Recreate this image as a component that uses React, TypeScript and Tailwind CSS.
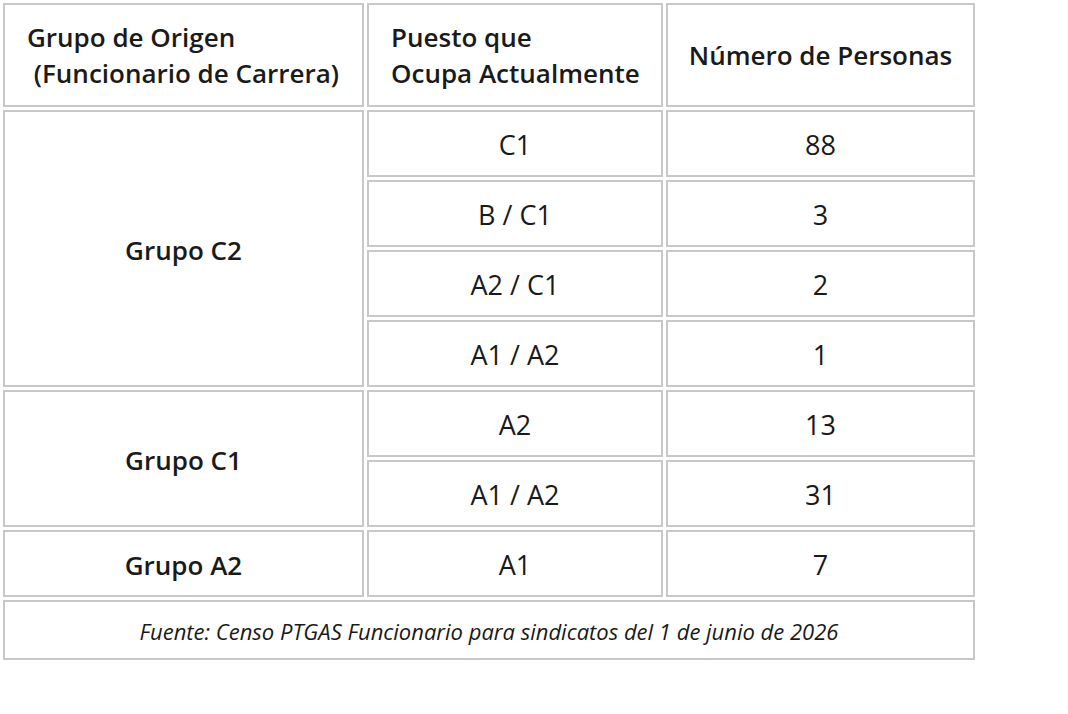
const rows: { group?: string; span?: number; puesto: string; n: string }[] = [
  { group: "Grupo C2", span: 4, puesto: "C1", n: "88" },
  { puesto: "B / C1", n: "3" },
  { puesto: "A2 / C1", n: "2" },
  { puesto: "A1 / A2", n: "1" },
  { group: "Grupo C1", span: 2, puesto: "A2", n: "13" },
  { puesto: "A1 / A2", n: "31" },
  { group: "Grupo A2", span: 1, puesto: "A1", n: "7" },
];

const cell = "border-2 border-[#c8c8c8] align-middle";

export default function App() {
  return (
    <div className="min-h-screen bg-white font-['Open_Sans',sans-serif] text-[#1a1a1a]">
      <table className="table-fixed border-separate border-spacing-[3px] w-[978px]">
        <thead>
          <tr className="h-[104px]">
            <th className={`${cell} w-[361px] pl-[22px] pr-1 whitespace-nowrap text-left text-[26px] font-semibold leading-[36px]`}>
              Grupo de Origen
              <br />
              &nbsp;(Funcionario de Carrera)
            </th>
            <th className={`${cell} w-[296px] pl-[22px] pr-1 whitespace-nowrap text-left text-[26px] font-semibold leading-[36px]`}>
              Puesto que
              <br />
              Ocupa Actualmente
            </th>
            <th className={`${cell} w-[309px] px-1 whitespace-nowrap text-center text-[26px] font-semibold leading-[36px]`}>
              Número de Personas
            </th>
          </tr>
        </thead>
        <tbody>
          {rows.map((r, i) => (
            <tr key={i} className="h-[67px]">
              {r.group && (
                <td rowSpan={r.span} className={`${cell} pt-[4px] text-center text-[26px] font-semibold`}>
                  {r.group}
                </td>
              )}
              <td className={`${cell} pt-[4px] text-center text-[27px]`}>{r.puesto}</td>
              <td className={`${cell} pt-[4px] text-center text-[27px]`}>{r.n}</td>
            </tr>
          ))}
          <tr className="h-[60px]">
            <td colSpan={3} className={`${cell} pt-[2px] text-center text-[22px] italic`}>
              Fuente: Censo PTGAS Funcionario para sindicatos del 1 de junio de 2026
            </td>
          </tr>
        </tbody>
      </table>
    </div>
  );
}
